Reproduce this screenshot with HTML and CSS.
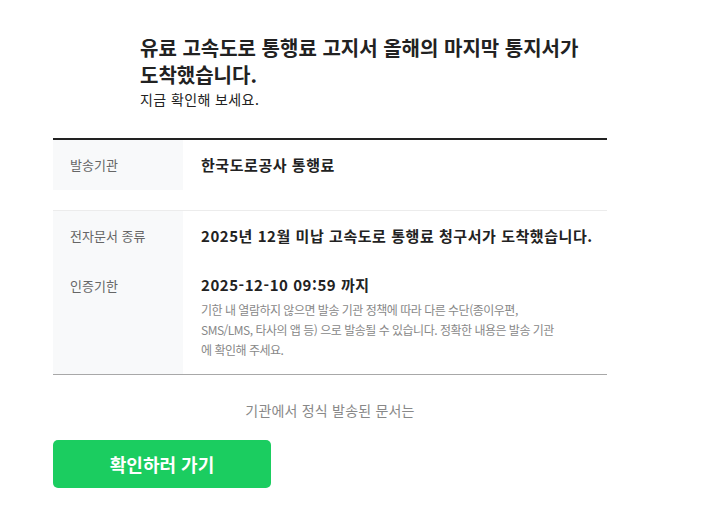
FILE: index.html
```html
<!DOCTYPE html>
<html lang="ko">
<head>
<meta charset="utf-8">
<link rel="stylesheet" href="styles.css">
</head>
<body>
<div class="page">
  <header class="intro">
    <h1 class="title">유료 고속도로 통행료 고지서 올해의 마지막 통지서가 도착했습니다.</h1>
    <p class="sub">지금 확인해 보세요.</p>
  </header>
  <section class="info">
    <div class="group first">
      <div class="label">발송기관</div>
      <div class="value"><strong>한국도로공사 통행료</strong></div>
    </div>
    <div class="group">
      <div class="label">전자문서 종류</div>
      <div class="value"><strong>2025년 12월 미납 고속도로 통행료 청구서가 도착했습니다.</strong></div>
      <div class="label">인증기한</div>
      <div class="value last">
        <strong>2025-12-10 09:59 까지</strong>
        <p class="desc">기한 내 열람하지 않으면 발송 기관 정책에 따라 다른 수단(종이우편, SMS/LMS, 타사의 앱 등) 으로 발송될 수 있습니다. 정확한 내용은 발송 기관에 확인해 주세요.</p>
      </div>
    </div>
  </section>
  <p class="note">기관에서 정식 발송된 문서는</p>
  <button class="cta" type="button">확인하러 가기</button>
</div>
</body>
</html>
```

FILE: styles.css
```css
* { box-sizing: border-box; }
html, body { margin: 0; padding: 0; background: #fff; }
body {
  font-family: "Noto Sans CJK KR", "Noto Sans", sans-serif;
  color: #222;
}
.page {
  width: 554px;
  margin-left: 53px;
  padding-top: 34px;
}
.intro { padding-left: 87px; }
.title {
  margin: 0;
  font-size: 20px;
  font-weight: 700;
  line-height: 27px;
  color: #222;
  width: 467px;
  word-break: keep-all;
}
.sub {
  margin: 1px 0 0;
  font-size: 14px;
  line-height: 20px;
  letter-spacing: 0.4px;
  color: #222;
}
.info {
  margin-top: 29px;
  border-top: 2px solid #222;
  border-bottom: 1px solid #a8a8a8;
}
.group {
  display: grid;
  grid-template-columns: 130px 1fr;
}
.group.first {
  align-items: start;
  padding-bottom: 20px;
  border-bottom: 1px solid #ececec;
}
.label {
  background: #f8f9fa;
  padding: 14px 17px;
  font-size: 13px;
  line-height: 22px;
  color: #666;
}
.value {
  padding: 14px 0 14px 18px;
  font-size: 15px;
  line-height: 22px;
  letter-spacing: 0.55px;
  color: #222;
}
.value strong { font-weight: 700; }
.value.last { padding-top: 13px; padding-bottom: 14px; }
.desc {
  margin: 4px 0 0;
  padding-right: 46px;
  font-size: 12px;
  line-height: 20px;
  letter-spacing: -0.5px;
  color: #888;
}
.note {
  margin: 25px 0 0;
  text-align: center;
  font-size: 14px;
  line-height: 20px;
  letter-spacing: 0.2px;
  color: #888;
}
.cta {
  display: block;
  margin-top: 20px;
  width: 218px;
  height: 48px;
  border: 0;
  border-radius: 5px;
  background: #1bcd60;
  color: #fff;
  font-family: "Noto Sans CJK KR", "Noto Sans", sans-serif;
  font-size: 18px;
  font-weight: 700;
  cursor: pointer;
}
```
